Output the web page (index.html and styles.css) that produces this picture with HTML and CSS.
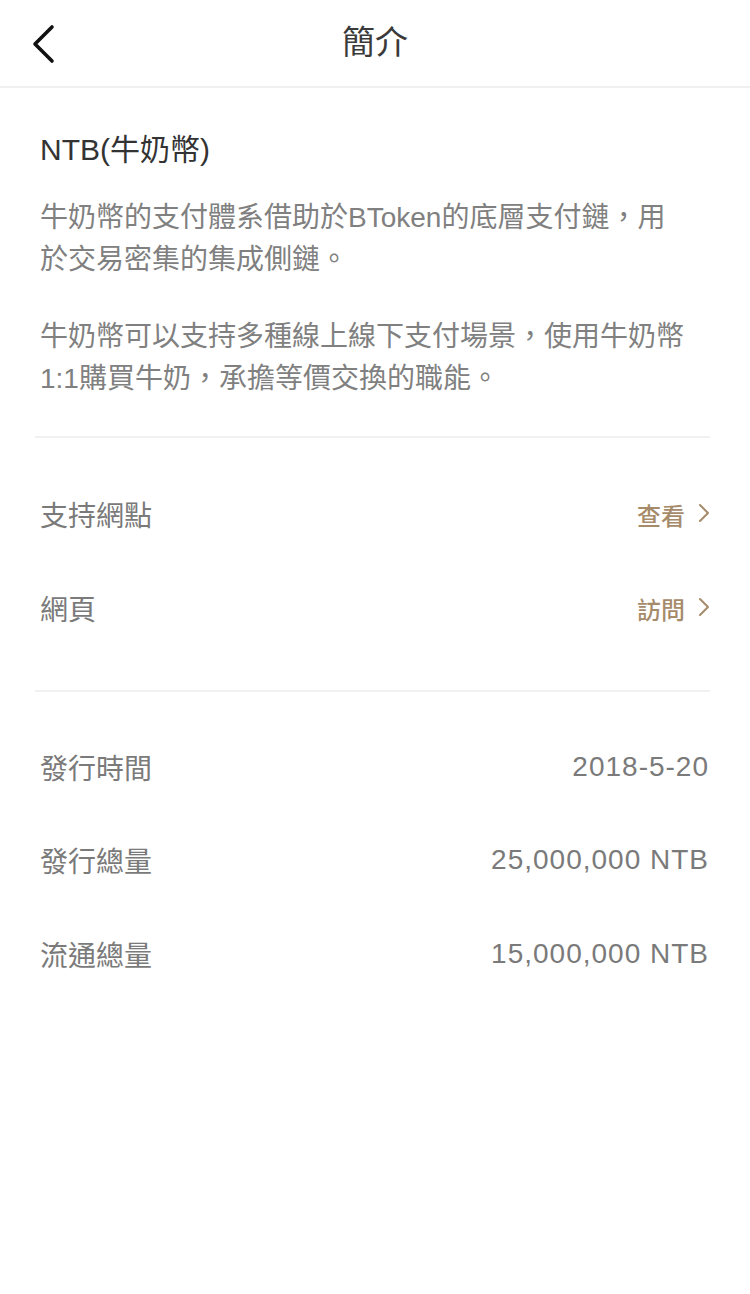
FILE: index.html
```html
<!DOCTYPE html>
<html lang="zh-Hant">
<head>
<meta charset="utf-8">
<title>簡介</title>
<link rel="stylesheet" href="styles.css">
</head>
<body>
<div class="page">
  <header class="nav">
    <div class="nav-back">
      <svg width="24" height="40" viewBox="0 0 24 40"><polyline points="21,3 4,20 21,37" fill="none" stroke="#111" stroke-width="3.6" stroke-linecap="round" stroke-linejoin="round"/></svg>
    </div>
    <div class="nav-title">簡介</div>
    <div class="nav-side"></div>
  </header>

  <main class="content">
    <section class="intro">
      <h1 class="coin-title">NTB(牛奶幣)</h1>
      <p class="desc">牛奶幣的支付體系借助於BToken的底層支付鏈，用於交易密集的集成側鏈。</p>
      <p class="desc desc-gap">牛奶幣可以支持多種線上線下支付場景，使用牛奶幣1:1購買牛奶，承擔等價交換的職能。</p>
    </section>

    <div class="divider"></div>

    <section class="list">
      <div class="row">
        <span class="label">支持網點</span>
        <span class="link">查看<svg class="chev" width="12" height="20" viewBox="0 0 12 20"><polyline points="2,2 10,10 2,18" fill="none" stroke="#a68b6b" stroke-width="2" stroke-linecap="round" stroke-linejoin="round"/></svg></span>
      </div>
      <div class="row">
        <span class="label">網頁</span>
        <span class="link">訪問<svg class="chev" width="12" height="20" viewBox="0 0 12 20"><polyline points="2,2 10,10 2,18" fill="none" stroke="#a68b6b" stroke-width="2" stroke-linecap="round" stroke-linejoin="round"/></svg></span>
      </div>
    </section>

    <div class="divider"></div>

    <section class="list list-info">
      <div class="row">
        <span class="label">發行時間</span>
        <span class="value">2018-5-20</span>
      </div>
      <div class="row">
        <span class="label">發行總量</span>
        <span class="value">25,000,000 NTB</span>
      </div>
      <div class="row">
        <span class="label">流通總量</span>
        <span class="value">15,000,000 NTB</span>
      </div>
    </section>
  </main>
</div>
</body>
</html>
```

FILE: styles.css
```css
* { box-sizing: border-box; }

html, body {
  margin: 0;
  padding: 0;
  background: #ffffff;
}

body {
  font-family: "Liberation Sans", "Noto Sans CJK TC", sans-serif;
  color: #333;
}

.page {
  width: 750px;
  min-height: 1294px;
  background: #fff;
}

.nav {
  height: 88px;
  display: grid;
  grid-template-columns: 90px 1fr 90px;
  align-items: center;
  border-bottom: 2px solid #f0f0f0;
}

.nav-back {
  padding-left: 31px;
  display: flex;
  align-items: center;
  height: 86px;
  padding-top: 2px;
}

.nav-back svg { display: block; }

.nav-title {
  text-align: center;
  font-size: 33px;
  font-weight: 400;
  color: #3a3a3a;
  line-height: 86px;
}

.content {
  margin: 0 40px 0 35px;
}

.intro {
  padding-left: 5px;
  padding-top: 42px;
  padding-bottom: 36px;
}

.coin-title {
  margin: 0;
  font-size: 30px;
  font-weight: 400;
  line-height: 40px;
  color: #333;
}

.desc {
  margin: 27px 0 0;
  width: 650px;
  font-size: 28px;
  line-height: 42px;
  color: #808080;
}

.desc-gap {
  margin-top: 35px;
}

.divider {
  height: 2px;
  background: #f1f1f1;
}

.list {
  padding: 29px 0 35px 5px;
}

.list-info {
  padding-top: 28px;
}

.row {
  height: 94px;
  display: flex;
  align-items: center;
  justify-content: space-between;
}

.list-info .row { height: 93.5px; }

.label {
  font-size: 28px;
  color: #7a7a7a;
}

.link {
  display: flex;
  align-items: center;
  gap: 13px;
  font-size: 24px;
  font-weight: 500;
  color: #a68b6b;
}

.chev { display: block; margin-top: -2px; }

.value {
  font-size: 28px;
  color: #7a7a7a;
  letter-spacing: 1px;
  padding-right: 1px;
}
```
